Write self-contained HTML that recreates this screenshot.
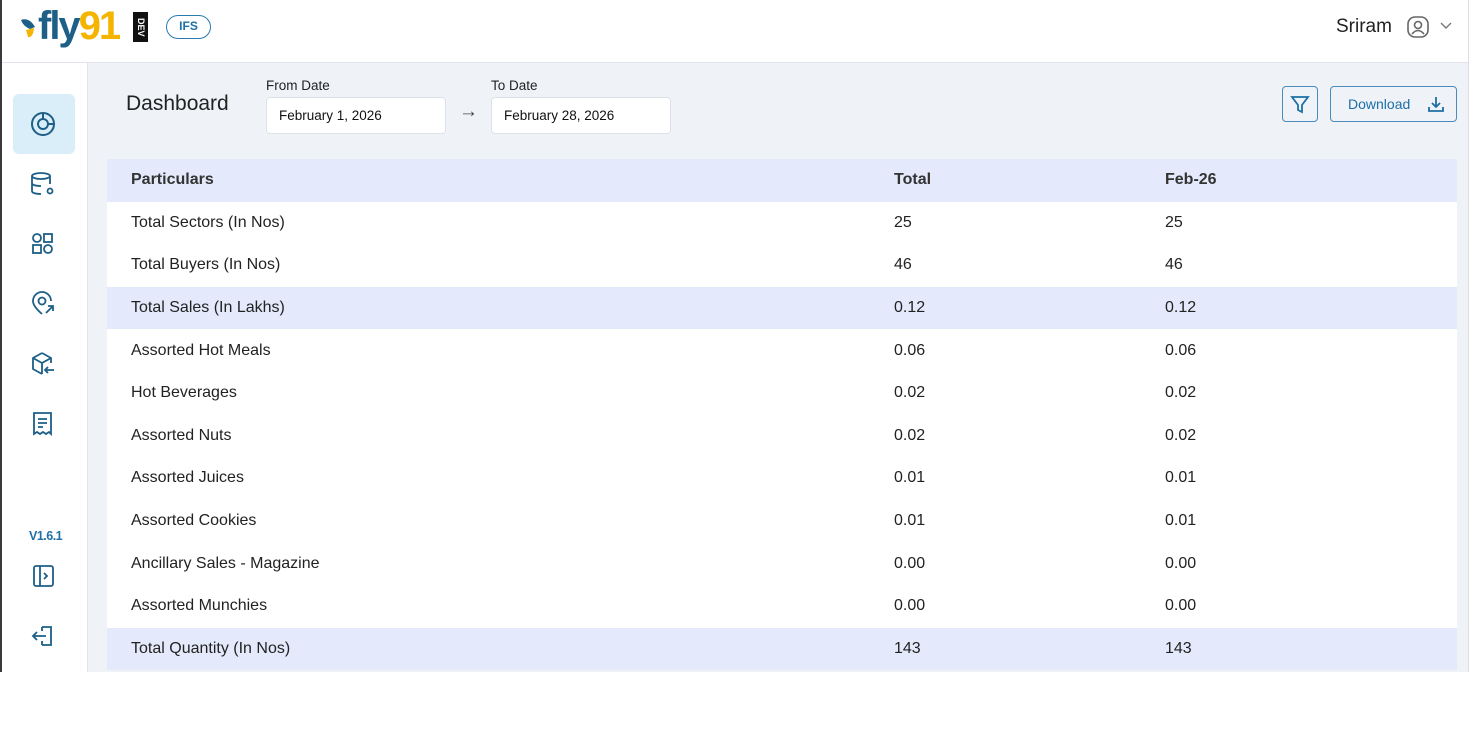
<!DOCTYPE html>
<html><head><style>
*{box-sizing:border-box;margin:0;padding:0}
body{width:1484px;height:744px;background:#fff;font-family:"Liberation Sans",sans-serif;position:relative;overflow:hidden;color:#222}
.frame{position:absolute;left:0;top:0;width:1476px;height:672px;background:#eff3f8}
.lb{position:absolute;left:0;top:0;width:2px;height:672px;background:#3a3a3a;z-index:5}
.hdr{position:absolute;left:0;top:0;width:100%;height:63px;background:#fff;border-bottom:1px solid #e2e6ec}
.side{position:absolute;left:0;top:63px;width:88px;height:609px;background:#fff;border-right:1px solid #e2e6ec}
.sb{position:absolute;right:0;top:0;width:8px;height:672px;background:#fff;border-left:1px solid #ddd}
.ic{position:absolute;left:29px;width:28px;height:28px}
.tbl{position:absolute;left:107px;top:159px;width:1350px}
.row{height:42.6px;display:flex;align-items:center;font-size:16px;background:#fff;color:#222;position:relative}
.row.h{background:#e4eafb}
.row div{position:absolute}
.c1{left:24px}.c2{left:787px}.c3{left:1058px}
.th{font-weight:bold;color:#333}
.lbl{position:absolute;font-size:13.5px;color:#222}
.inp{position:absolute;height:37px;width:180px;background:#fff;border:1px solid #dde2e8;border-radius:4px;font-size:13.5px;padding:10px 12px;color:#111}
</style></head><body>
<div class="frame">
<div class="hdr">
 <svg style="position:absolute;left:20px;top:14px" width="20" height="26" viewBox="0 0 20 26"><path d="M1 6 Q9 3 15 13 L10 15 Q3 12 1 6Z" fill="#1d5f86"/><path d="M6 16 L14 14 Q13 24 8 23Z" fill="#f5b400"/></svg>
 <div style="position:absolute;left:38px;top:4px;font-size:40px;font-weight:bold;letter-spacing:-2px;color:#1d5f86">fly<span style="color:#f5b400">91</span></div>
 <div style="position:absolute;left:133px;top:12px;width:15px;height:30px;background:#111;color:#fff;font-size:9px;font-weight:bold;writing-mode:vertical-rl;text-align:center;line-height:15px">DEV</div>
 <div style="position:absolute;left:166px;top:15px;width:45px;height:24px;border:1.5px solid #2a7ab0;border-radius:12px;font-size:12px;font-weight:bold;color:#1d6fa5;text-align:center;line-height:21px">IFS</div>
 <div style="position:absolute;left:1336px;top:16px;font-size:19px;color:#222">Sriram</div>
 <svg style="position:absolute;left:1406px;top:15px" width="24" height="24" viewBox="0 0 24 24" fill="none" stroke="#666" stroke-width="1.6"><rect x="2" y="2" width="20" height="20" rx="7"/><circle cx="12" cy="10" r="3.5"/><path d="M6 19 Q12 12 18 19"/></svg>
 <svg style="position:absolute;left:1440px;top:22px" width="12" height="8" viewBox="0 0 12 8" fill="none" stroke="#777" stroke-width="1.4"><path d="M1 1 L6 6 L11 1"/></svg>
</div>
<div class="side">
 <div style="position:absolute;left:13px;top:31px;width:62px;height:60px;background:#daeefa;border-radius:6px"></div>
 <svg class="ic" style="top:47px" viewBox="0 0 28 28" fill="none" stroke="#1d5f86" stroke-width="2"><circle cx="14" cy="14" r="11"/><circle cx="14" cy="14" r="5"/><path d="M14 3v6M19 14h6"/></svg>
 <svg class="ic" style="top:107px" viewBox="0 0 28 28" fill="none" stroke="#1d5f86" stroke-width="1.8"><ellipse cx="12" cy="6" rx="9" ry="3"/><path d="M3 6v15c0 2 4 3 9 3M21 6v8M3 13c0 2 4 3 9 3"/><circle cx="21" cy="21" r="2.5"/></svg>
 <svg class="ic" style="top:167px" viewBox="0 0 28 28" fill="none" stroke="#1d5f86" stroke-width="1.8"><circle cx="8" cy="8" r="4"/><rect x="15" y="4" width="8" height="8"/><rect x="4" y="15" width="8" height="8"/><circle cx="19" cy="19" r="4"/></svg>
 <svg class="ic" style="top:227px" viewBox="0 0 28 28" fill="none" stroke="#1d5f86" stroke-width="1.8"><path d="M13 24 C6 18 4 14 4 11 a9 9 0 0 1 18 0"/><circle cx="13" cy="11" r="3.5"/><path d="M17 23 L24 16 M19 16h5v5"/></svg>
 <svg class="ic" style="top:287px" viewBox="0 0 28 28" fill="none" stroke="#1d5f86" stroke-width="1.8"><path d="M13 3 L22 8 V13 M13 3 L4 8 V19 L13 24 M4 8 L13 13 L22 8 M13 13 V24"/><path d="M25 20 H16 M19 17 L16 20 L19 23"/></svg>
 <svg class="ic" style="top:347px" viewBox="0 0 28 28" fill="none" stroke="#1d5f86" stroke-width="1.8"><path d="M5 3 H22 V24 L20 22 L17 24 L14 22 L11 24 L8 22 L5 24Z"/><path d="M9 9h9M9 13h9M9 17h5"/></svg>
 <div style="position:absolute;left:29px;top:466px;font-size:12.5px;color:#1d6fa5;font-weight:bold;letter-spacing:-0.5px">V1.6.1</div>
 <svg class="ic" style="top:499px" viewBox="0 0 28 28" fill="none" stroke="#1d5f86" stroke-width="1.8"><rect x="5" y="4" width="19" height="20" rx="2"/><path d="M11 4v20M15 11l3 3-3 3"/></svg>
 <svg class="ic" style="top:559px" viewBox="0 0 28 28" fill="none" stroke="#1d5f86" stroke-width="1.8"><path d="M13 5 H22 V23 H13 M13 5 V9 M13 23 V19 M17 14 H4 M8 10 L4 14 L8 18"/></svg>
</div>
<div style="position:absolute;left:126px;top:92px;font-size:21px;color:#222">Dashboard</div>
<div class="lbl" style="left:266px;top:78px">From Date</div>
<div class="inp" style="left:266px;top:97px">February 1, 2026</div>
<div style="position:absolute;left:459px;top:101px;font-size:19px;color:#444">→</div>
<div class="lbl" style="left:491px;top:78px">To Date</div>
<div class="inp" style="left:491px;top:97px">February 28, 2026</div>
<div style="position:absolute;left:1282px;top:86px;width:36px;height:36px;border:1.5px solid #4a8cbc;border-radius:4px;background:#eff3f8">
<svg style="position:absolute;left:7px;top:7px" width="20" height="20" viewBox="0 0 20 20" fill="none" stroke="#1d6fa5" stroke-width="1.8"><path d="M2 3 H18 L12 11 V18 L8 16 V11 Z"/></svg></div>
<div style="position:absolute;left:1330px;top:86px;width:127px;height:36px;border:1.5px solid #4a8cbc;border-radius:4px;font-size:14px;color:#1d6fa5;padding:9px 0 0 17px">Download
<svg style="position:absolute;left:96px;top:8px" width="18" height="18" viewBox="0 0 18 18" fill="none" stroke="#1d6fa5" stroke-width="1.8"><path d="M9 2v10M5 8l4 4 4-4M2 12v4h14v-4"/></svg></div>
<div class="tbl">
 <div class="row h th"><div class="c1">Particulars</div><div class="c2">Total</div><div class="c3">Feb-26</div></div>
 <div class="row"><div class="c1">Total Sectors (In Nos)</div><div class="c2">25</div><div class="c3">25</div></div>
 <div class="row"><div class="c1">Total Buyers (In Nos)</div><div class="c2">46</div><div class="c3">46</div></div>
 <div class="row h"><div class="c1">Total Sales (In Lakhs)</div><div class="c2">0.12</div><div class="c3">0.12</div></div>
 <div class="row"><div class="c1">Assorted Hot Meals</div><div class="c2">0.06</div><div class="c3">0.06</div></div>
 <div class="row"><div class="c1">Hot Beverages</div><div class="c2">0.02</div><div class="c3">0.02</div></div>
 <div class="row"><div class="c1">Assorted Nuts</div><div class="c2">0.02</div><div class="c3">0.02</div></div>
 <div class="row"><div class="c1">Assorted Juices</div><div class="c2">0.01</div><div class="c3">0.01</div></div>
 <div class="row"><div class="c1">Assorted Cookies</div><div class="c2">0.01</div><div class="c3">0.01</div></div>
 <div class="row"><div class="c1">Ancillary Sales - Magazine</div><div class="c2">0.00</div><div class="c3">0.00</div></div>
 <div class="row"><div class="c1">Assorted Munchies</div><div class="c2">0.00</div><div class="c3">0.00</div></div>
 <div class="row h"><div class="c1">Total Quantity (In Nos)</div><div class="c2">143</div><div class="c3">143</div></div>
</div>
<div class="sb"></div>
</div>
<div class="lb"></div>
</body></html>
